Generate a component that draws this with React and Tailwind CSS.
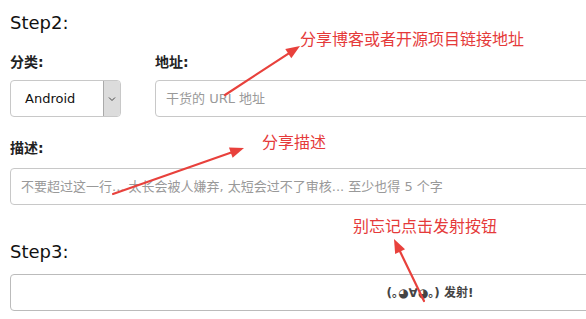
import React from "react";

const FONT = { fontFamily: '"DejaVu Sans", Verdana, "Noto Sans CJK SC", sans-serif' };
const CJK = { fontFamily: '"Noto Sans CJK SC", "DejaVu Sans", sans-serif' };

function Arrow({ x1, y1, x2, y2 }) {
  const dx = x2 - x1;
  const dy = y2 - y1;
  const len = Math.hypot(dx, dy);
  const ux = dx / len;
  const uy = dy / len;
  const hl = 14;
  const hw = 5.5;
  const bx = x2 - ux * hl;
  const by = y2 - uy * hl;
  const px = -uy;
  const py = ux;
  const pts = `${x2},${y2} ${bx + px * hw},${by + py * hw} ${bx - px * hw},${by - py * hw}`;
  return (
    <g>
      <line x1={x1} y1={y1} x2={bx + ux * 2} y2={by + uy * 2} stroke="#e8413c" strokeWidth="2.2" strokeLinecap="round" />
      <polygon points={pts} fill="#e8413c" />
    </g>
  );
}

export default function App() {
  return (
    <div className="relative w-[586px] h-[319px] overflow-hidden bg-white" style={FONT}>
      <div className="w-[860px] px-[10px] pt-[11px]">
        <div className="text-[18px] leading-[24px] text-[#111]">Step2:</div>

        <div className="flex mt-[17px]">
          <div className="w-[111px] shrink-0">
            <div className="h-[20px] text-[14px] leading-[20px] font-bold text-[#222]">分类:</div>
            <div className="mt-[8px] h-[37px] flex border border-[#c8c8c8] rounded-[4px] overflow-hidden bg-white">
              <div className="flex-1 flex items-center pl-[14px] text-[13px] text-[#111]">Android</div>
              <div className="w-[17px] border-l border-[#aaa] bg-[#dcdcdc] flex items-center justify-center">
                <svg width="8" height="6" viewBox="0 0 8 6">
                  <path d="M1 1.5 L4 4.5 L7 1.5" fill="none" stroke="#444" strokeWidth="1" />
                </svg>
              </div>
            </div>
          </div>
          <div className="ml-[34px] flex-1">
            <div className="h-[20px] text-[14px] leading-[20px] font-bold text-[#222]">地址:</div>
            <div className="mt-[8px] h-[37px] flex items-center border border-[#c8c8c8] rounded-[4px] pl-[10px] text-[13px] text-[#999]">
              干货的 URL 地址
            </div>
          </div>
        </div>

        <div className="mt-[21px] h-[20px] text-[14px] leading-[20px] font-bold text-[#222]">描述:</div>
        <div className="mt-[10px] h-[37px] flex items-center border border-[#c8c8c8] rounded-[4px] pl-[10px] text-[13px] text-[#999]">
          不要超过这一行... 太长会被人嫌弃, 太短会过不了审核... 至少也得 5 个字
        </div>

        <div className="mt-[35px] text-[18px] leading-[24px] text-[#111]">Step3:</div>
        <div className="mt-[10px] h-[37px] flex items-center justify-center border border-[#bbb] rounded-[4px] bg-white text-[12px] font-bold text-[#444]">
          (｡◕∀◕｡) 发射!
        </div>
      </div>

      <div className="absolute left-[300px] top-[27px] text-[16px] leading-[22px] text-[#e53a3a]" style={CJK}>
        分享博客或者开源项目链接地址
      </div>
      <div className="absolute left-[262px] top-[130px] text-[16px] leading-[22px] text-[#e53a3a]" style={CJK}>
        分享描述
      </div>
      <div className="absolute left-[353px] top-[214px] text-[16px] leading-[22px] text-[#e53a3a]" style={CJK}>
        别忘记点击发射按钮
      </div>

      <svg className="absolute inset-0 pointer-events-none" width="586" height="319">
        <Arrow x1={225} y1={95} x2={300} y2={46} />
        <Arrow x1={113} y1={194} x2={244} y2={148} />
        <Arrow x1={424} y1={301} x2={394} y2={239} />
      </svg>
    </div>
  );
}
